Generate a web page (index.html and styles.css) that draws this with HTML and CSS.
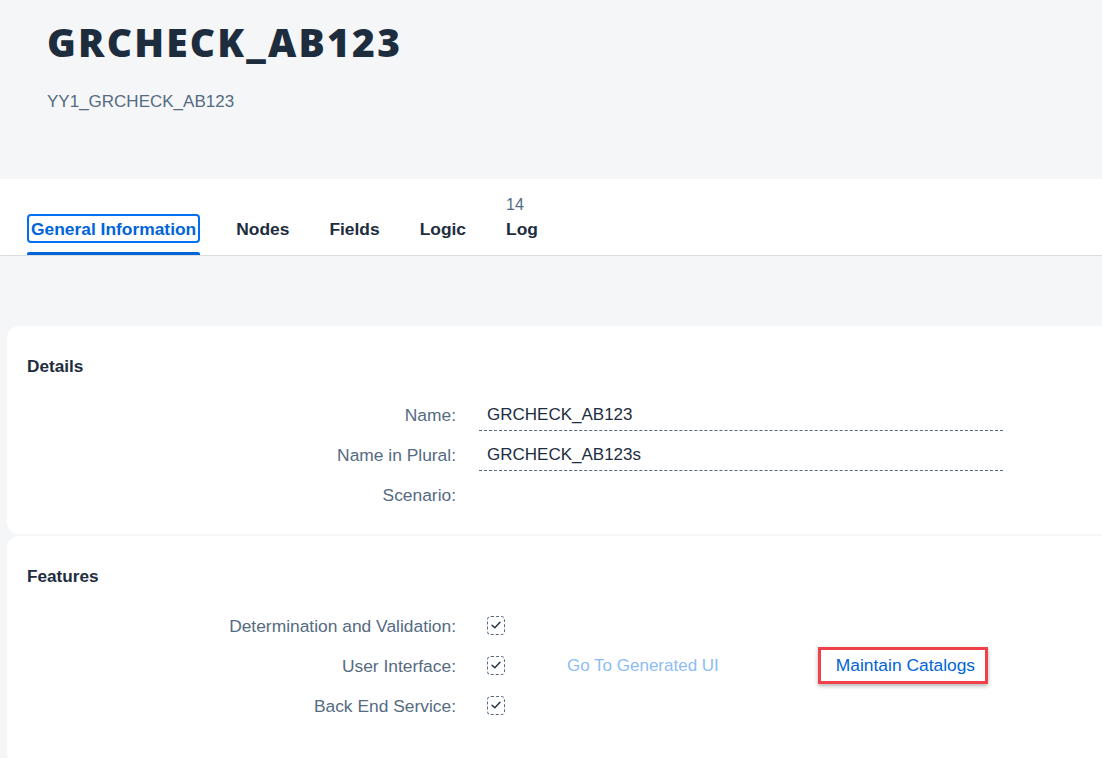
FILE: index.html
```html
<!DOCTYPE html>
<html lang="en">
<head>
<meta charset="utf-8">
<title>GRCHECK_AB123</title>
<link rel="stylesheet" href="styles.css">
</head>
<body>
  <header class="obj-header">
    <h1 class="obj-title">GRCHECK_AB123</h1>
    <div class="obj-subtitle">YY1_GRCHECK_AB123</div>
  </header>

  <nav class="tabbar">
    <div class="tabs">
      <div class="tab tab-active">
        <span class="tab-label">General Information</span>
        <span class="tab-underline"></span>
      </div>
      <div class="tab">
        <span class="tab-label">Nodes</span>
        <span class="tab-underline"></span>
      </div>
      <div class="tab">
        <span class="tab-label">Fields</span>
        <span class="tab-underline"></span>
      </div>
      <div class="tab">
        <span class="tab-label">Logic</span>
        <span class="tab-underline"></span>
      </div>
      <div class="tab">
        <span class="tab-count">14</span>
        <span class="tab-label">Log</span>
        <span class="tab-underline"></span>
      </div>
    </div>
  </nav>

  <main class="content">
    <section class="card card-details">
      <h2 class="card-title">Details</h2>
      <div class="form">
        <div class="row">
          <div class="label">Name:</div>
          <div class="field">GRCHECK_AB123</div>
        </div>
        <div class="row">
          <div class="label">Name in Plural:</div>
          <div class="field">GRCHECK_AB123s</div>
        </div>
        <div class="row">
          <div class="label">Scenario:</div>
          <div class="value"></div>
        </div>
      </div>
    </section>

    <section class="card card-features">
      <h2 class="card-title">Features</h2>
      <div class="form">
        <div class="row">
          <div class="label">Determination and Validation:</div>
          <div class="value">
            <span class="checkbox"><svg viewBox="0 0 18 18" width="18" height="18"><path d="M5 9.2 L7.8 11.8 L13 6.2" fill="none" stroke="#1d2d3e" stroke-width="1.4" stroke-linecap="round" stroke-linejoin="round"/></svg></span>
          </div>
        </div>
        <div class="row">
          <div class="label">User Interface:</div>
          <div class="value">
            <span class="checkbox"><svg viewBox="0 0 18 18" width="18" height="18"><path d="M5 9.2 L7.8 11.8 L13 6.2" fill="none" stroke="#1d2d3e" stroke-width="1.4" stroke-linecap="round" stroke-linejoin="round"/></svg></span>
            <span class="link link-disabled">Go To Generated UI</span>
            <span class="highlight"><a class="link" href="#">Maintain Catalogs</a></span>
          </div>
        </div>
        <div class="row">
          <div class="label">Back End Service:</div>
          <div class="value">
            <span class="checkbox"><svg viewBox="0 0 18 18" width="18" height="18"><path d="M5 9.2 L7.8 11.8 L13 6.2" fill="none" stroke="#1d2d3e" stroke-width="1.4" stroke-linecap="round" stroke-linejoin="round"/></svg></span>
          </div>
        </div>
      </div>
    </section>
  </main>
</body>
</html>
```

FILE: styles.css
```css
html, body {
  margin: 0;
  padding: 0;
}

body {
  background: #f5f6f7;
  font-family: "Liberation Sans", Arial, sans-serif;
  font-size: 17px;
  color: #1d2d3e;
  overflow: hidden;
}

.obj-header {
  height: 179px;
  box-sizing: border-box;
  padding: 19px 0 0 47px;
}

.obj-title {
  margin: 0;
  font-family: "Open Sans", Lato, "Liberation Sans", sans-serif;
  font-weight: 800;
  font-size: 39px;
  line-height: 46px;
  color: #1d2d3e;
  letter-spacing: 2.2px;
}

.obj-subtitle {
  margin-top: 27px;
  line-height: 20px;
  color: #556b82;
}

.tabbar {
  background: #fff;
  height: 76px;
  border-bottom: 1px solid #d9dde1;
}

.tabs {
  display: flex;
  align-items: flex-end;
  gap: 32px;
  height: 100%;
  padding-left: 27px;
}

.tab {
  display: flex;
  flex-direction: column;
}

.tab-count {
  font-size: 16px;
  line-height: 18px;
  color: #556b82;
  padding-left: 4px;
}

.tab-label {
  font-size: 17.4px;
  font-weight: bold;
  line-height: 29px;
  height: 29px;
  padding: 1px 4px 0;
  box-sizing: border-box;
  border-radius: 4px;
  color: #1d2d3e;
}

.tab-underline {
  display: block;
  height: 3px;
  margin-top: 9px;
  border-radius: 2px 2px 0 0;
}

.tab-active .tab-label {
  color: #0064d9;
  box-shadow: inset 0 0 0 2px #0070f2;
}

.tab-active .tab-underline {
  background: #0064d9;
}

.content {
  padding: 70px 0 0 7px;
  display: flex;
  flex-direction: column;
  gap: 2px;
}

.card {
  background: #fff;
  border-radius: 12px 0 0 12px;
  padding: 30px 0 21px 20px;
}

.card-title {
  margin: 0;
  font-size: 17.2px;
  font-weight: bold;
  line-height: 20px;
  color: #1d2d3e;
}

.card-details .form {
  margin-top: 17px;
}

.card-features .form {
  margin-top: 18px;
}

.card-features {
  padding-bottom: 40px;
}

.row {
  display: flex;
  align-items: center;
  height: 40px;
  gap: 23px;
}

.label {
  width: 429px;
  padding-top: 4px;
  text-align: right;
  font-size: 17.4px;
  color: #556b82;
}

.field {
  width: 524px;
  height: 36px;
  box-sizing: border-box;
  padding: 4px 8px 0;
  line-height: 32px;
  border-bottom: 1px dashed #556b82;
  color: #1d2d3e;
}

.value {
  display: flex;
  align-items: center;
  padding-top: 2px;
}

.checkbox {
  display: inline-flex;
  width: 18px;
  height: 19px;
  margin-left: 8px;
  border: 1px dashed #556b82;
  border-radius: 4px;
  box-sizing: border-box;
  align-items: center;
  justify-content: center;
}

.checkbox svg {
  flex: none;
}

.link {
  font-size: 17.4px;
  color: #0064d9;
  text-decoration: none;
}

.link-disabled {
  font-size: 17px;
  padding-top: 2px;
  color: #8dbdf3;
  margin-left: 62px;
}

.highlight {
  margin-left: 99px;
  border: 3px solid #f0414a;
  padding: 5px 10px 5px 15px;
  box-shadow: 0 2px 4px rgba(0, 0, 0, 0.3);
}
```
